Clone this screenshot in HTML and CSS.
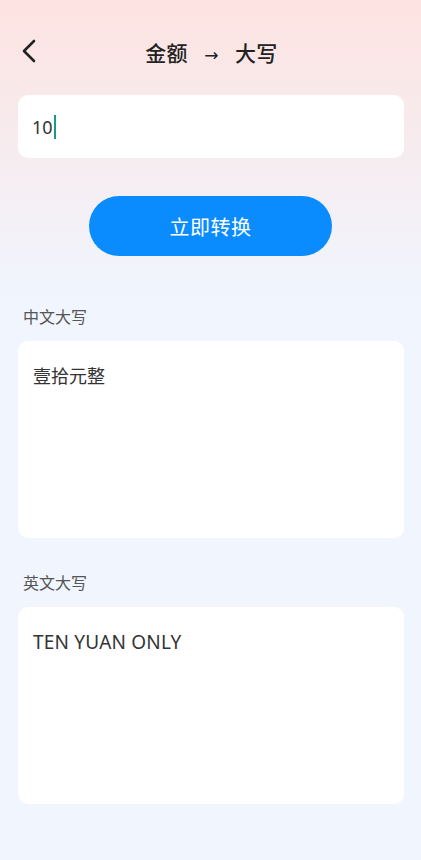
FILE: index.html
```html
<!DOCTYPE html>
<html>
<head>
    <title>金额转大写</title>
    <link rel="stylesheet" href="styles.css">
</head>
<body>
    <div class="page">
        <div class="header">
            <span class="back">
                <svg width="16" height="24" viewBox="0 0 16 24"><path d="M13 2 L3 12 L13 22" fill="none" stroke="#222" stroke-width="2.6" stroke-linecap="round" stroke-linejoin="round"/></svg>
            </span>
            <h1>金额<span class="arrow">→</span>大写</h1>
        </div>

        <div class="input-card">
            <span class="input-text">10</span><span class="caret"></span>
        </div>

        <div class="btn-row">
            <button class="convert-btn">立即转换</button>
        </div>

        <div class="section-label">中文大写</div>
        <div class="result-card">壹拾元整</div>

        <div class="section-label">英文大写</div>
        <div class="result-card result-en">TEN YUAN ONLY</div>
    </div>
</body>
</html>
```

FILE: styles.css
```css
body {
    margin: 0;
    font-family: "Noto Sans", "Noto Sans CJK SC", sans-serif;
    background: #f0f5fe;
}
.page {
    min-height: 860px;
    padding: 0 17px 0 18px;
    background: linear-gradient(to bottom, #fde3e1 0%, #f5eef2 180px, #f0f5fe 300px, #f0f5fe 100%);
    box-sizing: border-box;
}
.header {
    position: relative;
    height: 44px;
    padding-top: 30px;
    display: flex;
    align-items: center;
    justify-content: center;
}
.back {
    position: absolute;
    left: 3px;
    top: 39px;
    width: 16px;
    height: 24px;
}
.header h1 {
    margin: 0;
    font-size: 21px;
    font-weight: 500;
    color: #222;
    letter-spacing: 0.5px;
    padding-left: 1px;
}
.arrow {
    font-family: "DejaVu Sans", sans-serif;
    font-weight: 400;
    font-size: 17px;
    margin: 0 16px;
}
.input-card {
    margin-top: 21px;
    height: 63px;
    background: #fff;
    border-radius: 10px;
    display: flex;
    align-items: center;
    padding-left: 14px;
}
.input-text {
    font-size: 18px;
    color: #333;
}
.caret {
    display: inline-block;
    width: 2px;
    height: 24px;
    background: #1a9a86;
    margin-left: 1px;
}
.btn-row {
    display: flex;
    justify-content: center;
    margin-top: 38px;
    padding-right: 1px;
}
.convert-btn {
    width: 243px;
    height: 60px;
    border: none;
    border-radius: 30px;
    background: #0a8cff;
    color: #fff;
    font-family: inherit;
    font-size: 20px;
    letter-spacing: 0.5px;
}
.section-label {
    margin-top: 50px;
    padding-left: 5px;
    font-size: 16px;
    color: #555;
    line-height: 22px;
}
.result-card {
    margin-top: 13px;
    height: 197px;
    background: #fff;
    border-radius: 10px;
    padding: 23px 15px 0;
    box-sizing: border-box;
    font-size: 18px;
    color: #333;
    line-height: 24px;
}
.result-en {
    font-size: 19px;
    letter-spacing: 0.2px;
}
.result-card + .section-label {
    margin-top: 34px;
}
```
